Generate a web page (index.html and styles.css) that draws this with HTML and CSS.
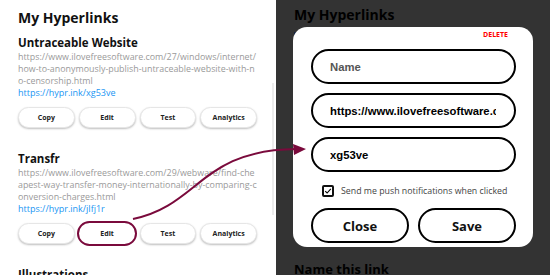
FILE: index.html
```html
<!DOCTYPE html>
<html lang="en">
<head>
    <meta charset="UTF-8">
    <title>My Hyperlinks</title>
    <link rel="stylesheet" href="styles.css">
</head>
<body>
    <div class="links">
        <div class="links-main">
            <h1 class="page-title">My Hyperlinks</h1>

            <div class="link-item">
                <div class="link-name">Untraceable Website</div>
                <div class="link-url">https://www.ilovefreesoftware.com/27/windows/internet/how-to-anonymously-publish-untraceable-website-with-no-censorship.html</div>
                <div class="link-short">https://hypr.ink/xg53ve</div>
                <div class="link-actions">
                    <button class="pill">Copy</button>
                    <button class="pill">Edit</button>
                    <button class="pill">Test</button>
                    <button class="pill">Analytics</button>
                </div>
            </div>

            <div class="link-item">
                <div class="link-name">Transfr</div>
                <div class="link-url">https://www.ilovefreesoftware.com/29/webware/find-cheapest-way-transfer-money-internationally-by-comparing-conversion-charges.html</div>
                <div class="link-short">https://hypr.ink/jlfj1r</div>
                <div class="link-actions">
                    <button class="pill">Copy</button>
                    <button class="pill highlight">Edit</button>
                    <button class="pill">Test</button>
                    <button class="pill">Analytics</button>
                </div>
            </div>

            <div class="link-item">
                <div class="link-name">Illustrations</div>
            </div>
        </div>
        <div class="scroll-track"></div>
    </div>

    <div class="editor">
        <h1 class="page-title">My Hyperlinks</h1>
        <div class="banner"></div>
        <div class="field-label">Name this link</div>

        <div class="modal">
            <div class="modal-top"><span class="delete">DELETE</span></div>
            <input class="field" type="text" placeholder="Name">
            <input class="field" type="text" value="https://www.ilovefreesoftware.com/29/webware/find-cheapest-way">
            <input class="field" type="text" value="xg53ve">
            <label class="notify">
                <span class="checkbox">
                    <svg width="8" height="8" viewBox="0 0 8 8"><path d="M1.2 4.2 L3.1 6 L6.8 1.8" fill="none" stroke="#000" stroke-width="1.1"/></svg>
                </span>
                Send me push notifications when clicked
            </label>
            <div class="modal-actions">
                <button class="big-btn">Close</button>
                <button class="big-btn">Save</button>
            </div>
        </div>
    </div>

    <!-- annotation arrow from the Edit button to the editor -->
    <svg class="arrow" width="550" height="275" viewBox="0 0 550 275">
        <path d="M133 219 C200 205 200 150 296 149" fill="none" stroke="#7a0a3c" stroke-width="2"/>
        <path d="M293 144 L306 149 L294 155 Z" fill="#7a0a3c"/>
    </svg>
</body>
</html>
```

FILE: styles.css
```css
body {
    margin: 0;
    width: 550px;
    height: 275px;
    display: flex;
    overflow: hidden;
    font-family: 'Open Sans', 'Noto Sans', sans-serif;
    position: relative;
    background: #fff;
}

.links {
    width: 276px;
    height: 275px;
    overflow: hidden;
    display: flex;
    background: #fff;
}

.links-main {
    width: 239px;
    padding: 7px 3px 0 18px;
}

.scroll-track {
    width: 2px;
    height: 132px;
    margin: 83px 0 0 12px;
    background: #ececec;
}

.page-title {
    margin: 0;
    font-size: 14px;
    font-weight: 700;
    line-height: 22px;
    color: #111;
}

.links .page-title {
    margin-bottom: 7px;
}

.link-item {
    height: 116px;
}

.link-name {
    font-size: 11.5px;
    font-weight: 700;
    line-height: 14px;
    color: #111;
}

.link-url {
    font-size: 8.9px;
    line-height: 12px;
    color: #9a9a9a;
    word-break: break-all;
    margin-top: 1px;
}

.link-short {
    font-size: 9px;
    line-height: 12px;
    color: #2196f3;
}

.link-actions {
    display: flex;
    gap: 4px;
    margin-top: 8px;
}

.pill {
    width: 57px;
    height: 21px;
    border: 1px solid #e6e6e6;
    border-radius: 11px;
    background: #fff;
    box-shadow: 0 1px 2px rgba(0, 0, 0, 0.25);
    font-family: inherit;
    font-size: 7px;
    font-weight: 700;
    color: #222;
    padding: 0;
}

.pill.highlight {
    width: 60px;
    height: 25px;
    margin: -2px -1.5px;
    border: 2.5px solid #7a0a3c;
    border-radius: 13px;
    box-shadow: none;
}

.editor {
    flex: 1;
    background: #333;
    padding: 4px 0 0 18px;
    position: relative;
}

.editor .page-title {
    color: #000;
}

.banner {
    width: 60px;
    height: 40px;
    margin-top: 6px;
    background: #152440;
}

.field-label {
    margin-top: 188px;
    font-size: 13px;
    font-weight: 700;
    color: #000;
}

.modal {
    position: absolute;
    left: 17px;
    top: 27px;
    width: 240px;
    height: 220px;
    background: #fff;
    border-radius: 14px;
    box-sizing: border-box;
    padding: 4px 17px 0 18px;
    display: flex;
    flex-direction: column;
}

.modal-top {
    display: flex;
    justify-content: flex-end;
    height: 18px;
    padding-right: 8px;
}

.delete {
    color: #f00;
    font-size: 7px;
    font-weight: 700;
    line-height: 8px;
}

.field {
    height: 35px;
    box-sizing: border-box;
    border: 2.5px solid #000;
    border-radius: 18px;
    padding: 0 18px 0 17px;
    margin-bottom: 9px;
    font-family: 'Liberation Sans', Arial, sans-serif;
    font-size: 11.3px;
    font-weight: 700;
    color: #000;
    outline: none;
    width: 205px;
}

.field::placeholder {
    color: #555;
}

.notify {
    display: flex;
    align-items: center;
    gap: 7px;
    margin: 4px 0 0 11px;
    font-size: 8.8px;
    white-space: nowrap;
    color: #444;
}

.checkbox {
    width: 12px;
    height: 12px;
    flex-shrink: 0;
    box-sizing: border-box;
    border: 2px solid #111;
    border-radius: 2px;
    display: flex;
    align-items: center;
    justify-content: center;
}

.modal-actions {
    display: flex;
    gap: 9px;
    margin-top: 11px;
}

.big-btn {
    width: 98px;
    height: 35px;
    border: 2.5px solid #000;
    border-radius: 18px;
    background: #fff;
    font-family: inherit;
    font-size: 13px;
    font-weight: 700;
    color: #111;
}

.arrow {
    position: absolute;
    left: 0;
    top: 0;
    pointer-events: none;
}
```
